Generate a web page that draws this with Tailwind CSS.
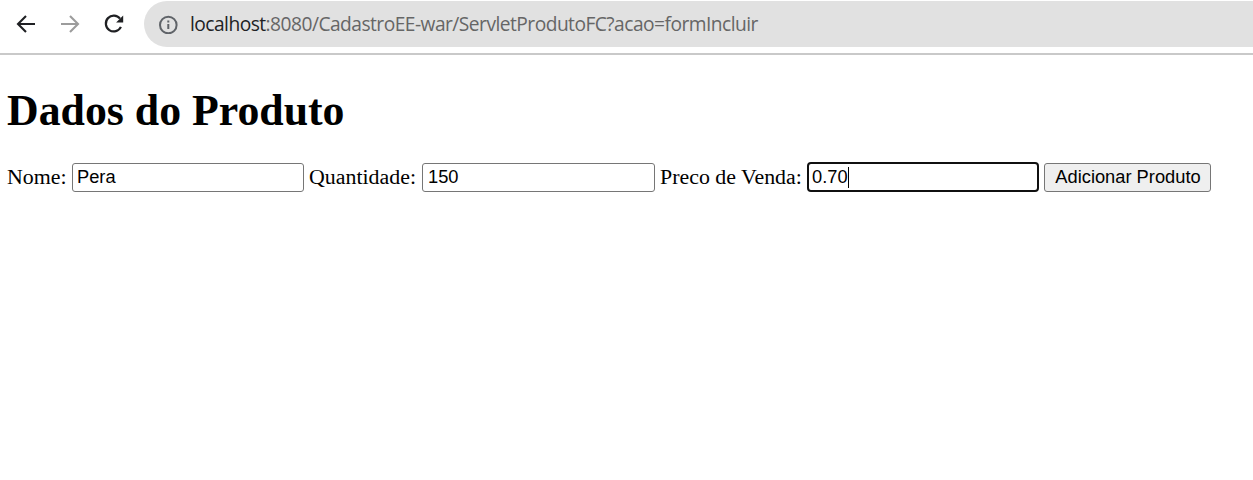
<!DOCTYPE html>
<html lang="pt-BR">
<head>
<meta charset="utf-8">
<title>Dados do Produto</title>
<script src="https://cdn.jsdelivr.net/npm/@tailwindcss/browser@4"></script>
</head>
<body class="bg-white text-black h-[480px] overflow-hidden">
<header class="h-[55px] border-b-2 border-[#c9c9c9] flex items-start pt-px">
  <nav class="flex items-center h-[46px] w-[144px] shrink-0 pl-[15px] gap-5">
    <svg class="size-6" viewBox="0 0 24 24" fill="none" stroke="#1f2023" stroke-width="2.1"><path d="M20 12H3.5M11 4L3 12l8 8"/></svg>
    <svg class="size-6" viewBox="0 0 24 24" fill="none" stroke="#9c9c9c" stroke-width="2.1"><path d="M2 12h16.5M11 4l8 8-8 8"/></svg>
    <svg class="size-6" viewBox="0 0 24 24" fill="none" stroke="#1f2023" stroke-width="2.2"><path d="M17 6.7A7.9 7.9 0 1 0 17.9 14.9"/><path d="M20.2 3.4v7.1h-7.1z" fill="#1f2023" stroke="none"/></svg>
  </nav>
  <div class="flex-1 h-[46px] bg-[#e1e1e1] rounded-l-full flex items-center pl-[14px]">
    <svg class="size-5 shrink-0" viewBox="0 0 20 20" fill="none" stroke="#5f6368" stroke-width="2"><circle cx="10.3" cy="11" r="8.3"/><path d="M10.3 9.9v5.2M10.3 6.5v2"/></svg>
    <div class="ml-3 text-[19.2px] leading-6 tracking-[-0.53px] whitespace-nowrap font-['Open_Sans',sans-serif] text-[#666]"><span class="text-[#202124]">localhost</span>:8080/CadastroEE-war/ServletProdutoFC?acao=formIncluir</div>
  </div>
</header>
<main class="pl-[7px] font-['Liberation_Serif',serif]">
  <h1 class="pt-[30px] text-[43.8px] leading-[50px] font-bold whitespace-nowrap">Dados do Produto</h1>
  <form class="mt-[27px] flex items-center h-[30px] text-[21.9px] whitespace-nowrap">
    <label class="w-[65px]">Nome:</label>
    <input class="w-[232px] h-[29px] border border-[#767676] rounded-[3px] px-[4px] text-[18.3px] font-['Liberation_Sans',sans-serif]" value="Pera">
    <label class="w-[118px] pl-[5px]">Quantidade:</label>
    <input class="w-[233px] h-[29px] border border-[#767676] rounded-[3px] px-[5px] text-[18.3px] font-['Liberation_Sans',sans-serif]" value="150">
    <label class="w-[152px] pl-[5px]">Preco de Venda:</label>
    <div class="w-[232px] h-[30px] border-2 border-[#101010] rounded-[4px] pl-[3px] flex items-center text-[18.3px] font-['Liberation_Sans',sans-serif]"><span>0.70</span><span class="w-px h-[21px] bg-black"></span></div>
    <button type="button" class="ml-[5px] w-[167px] h-[29px] border border-[#767676] rounded-[3px] bg-[#efefef] pl-px text-[18.3px] leading-none font-['Liberation_Sans',sans-serif]">Adicionar Produto</button>
  </form>
</main>
</body>
</html>
